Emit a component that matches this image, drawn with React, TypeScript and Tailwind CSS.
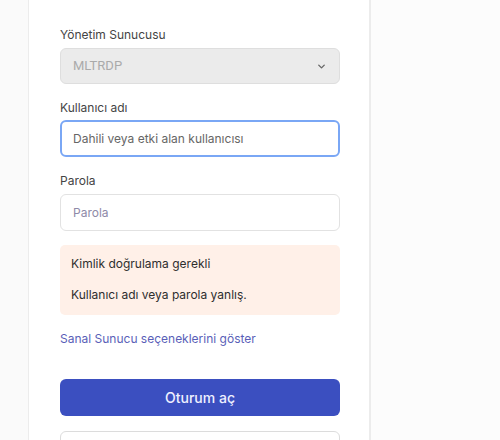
import { ChevronDown } from 'lucide-react';

const font = { fontFamily: 'Inter, "Noto Sans", sans-serif' };

export default function App() {
  return (
    <div className="flex h-[440px] w-[500px] overflow-hidden bg-[#fafafa]" style={font}>
      <div className="ml-[28px] w-[343px] shrink-0 border-l border-r-2 border-[#ececec] bg-white pl-[31px] pr-[29px] pt-[27px]">
        {/* Yönetim sunucusu */}
        <label className="block text-[12px] leading-[16px] text-[#444444]">Yönetim Sunucusu</label>
        <div className="mt-[5px] flex h-[36px] items-center justify-between rounded-[6px] border border-[#dedede] bg-[#ebebeb] pl-[12px] pr-[12px]">
          <span className="text-[13px] text-[#aaaaaa]" style={{ fontFamily: 'Roboto, sans-serif' }}>MLTRDP</span>
          <ChevronDown size={11} strokeWidth={3} className="text-[#666]" />
        </div>

        {/* Kullanıcı adı */}
        <label className="mt-[16px] block text-[12px] leading-[16px] text-[#444444]">Kullanıcı adı</label>
        <div className="mt-[4px] flex h-[37px] items-center rounded-[6px] border-2 border-[#7aa7f5] bg-white pl-[11px]">
          <span className="text-[12px] text-[#666666]">Dahili veya etki alan kullanıcısı</span>
        </div>

        {/* Parola */}
        <label className="mt-[16px] block text-[12px] leading-[16px] text-[#444444]">Parola</label>
        <div className="mt-[5px] flex h-[37px] items-center rounded-[6px] border border-[#e2e2e2] bg-white pl-[12px]">
          <span className="text-[12px] text-[#8e8aa8]">Parola</span>
        </div>

        {/* Hata */}
        <div className="mt-[14px] rounded-[5px] bg-[#fff0e8] px-[11px] pb-[12px] pt-[11px] text-[12px] text-[#2e2e2e]">
          <p className="leading-[16px]">Kimlik doğrulama gerekli</p>
          <p className="mt-[15px] leading-[16px]">Kullanıcı adı veya parola yanlış.</p>
        </div>

        <a className="mt-[16px] block text-[12px] leading-[16px] text-[#5a5fb8]">Sanal Sunucu seçeneklerini göster</a>

        <button className="mt-[32px] flex h-[37px] w-full items-center justify-center rounded-[6px] bg-[#3b4fc0] text-[14px] font-medium text-[#eef0ff]">
          Oturum aç
        </button>

        <div className="mt-[15px] h-[30px] rounded-[6px] border border-[#dcdcdc] bg-white" />
      </div>
      <div className="flex-1 bg-[#fcfcfc]" />
    </div>
  );
}
